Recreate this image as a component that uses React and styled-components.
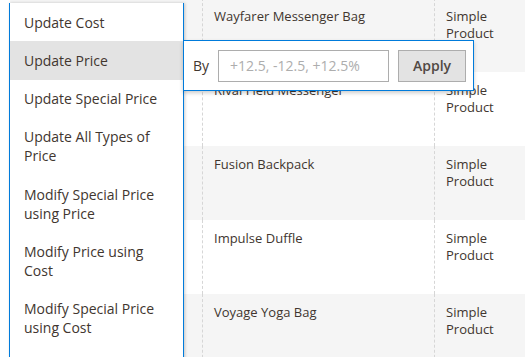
import React from "react";
import styled, { createGlobalStyle } from "styled-components";

const Global = createGlobalStyle`
  html, body {
    margin: 0;
    padding: 0;
    background: #fff;
    overflow: hidden;
  }
  body {
    font-family: "Open Sans", "Liberation Sans", sans-serif;
    color: #41362f;
  }
`;

const Page = styled.div`
  position: relative;
  width: 525px;
  height: 357px;
  overflow: hidden;
  padding-left: 10px;
  box-sizing: border-box;
`;

const Grid = styled.div`
  margin-top: -2px;
  display: flex;
  flex-direction: column;
`;

const Row = styled.div`
  display: grid;
  grid-template-columns: 193px 232px 1fr;
  height: 74px;
  background: ${(p) => (p.$odd ? "#f5f5f5" : "#fff")};
`;

const Cell = styled.div`
  padding: 10px 11px 0 11px;
  font-size: 13px;
  line-height: 17px;
  color: #41362f;
  border-right: ${(p) => (p.$last ? "none" : "1px dashed #d6d6d6")};
`;

const Menu = styled.ul`
  position: absolute;
  left: 9px;
  top: 3px;
  bottom: -20px;
  width: 173px;
  margin: 0;
  padding: 0;
  list-style: none;
  background: #fff;
  border: 1px solid #007bdb;
  border-top: none;
  box-shadow: 1px 0 3px rgba(0, 0, 0, 0.2);
`;

const Item = styled.li`
  position: relative;
  padding: 9.65px 14px;
  font-size: 14px;
  line-height: 19px;
  color: #41362f;
  background: ${(p) => (p.$active ? "#e3e3e3" : "transparent")};
`;

const Popover = styled.div`
  position: absolute;
  left: 173px;
  top: -1px;
  width: 291px;
  height: 51px;
  background: #fff;
  border: 1px solid #007bdb;
  box-shadow: 0 2px 4px rgba(0, 0, 0, 0.2);
  display: flex;
  align-items: center;
  padding: 0 7px 0 9px;
  box-sizing: border-box;
  gap: 9px;
  z-index: 2;
`;

const Label = styled.span`
  font-size: 14px;
  color: #41362f;
`;

const Input = styled.input`
  width: 171px;
  height: 32px;
  box-sizing: border-box;
  border: 1px solid #adadad;
  padding: 0 11px;
  font-family: "Open Sans", "Liberation Sans", sans-serif;
  font-size: 14px;
  color: #41362f;
  outline: none;
  &::placeholder {
    color: #adadad;
  }
`;

const Button = styled.button`
  width: 68px;
  height: 32px;
  box-sizing: border-box;
  background: #e3e3e3;
  border: 1px solid #adadad;
  font-family: "Open Sans", "Liberation Sans", sans-serif;
  font-size: 14px;
  font-weight: 600;
  color: #514943;
  padding: 0;
`;

const rows = [
  "Wayfarer Messenger Bag",
  "Rival Field Messenger",
  "Fusion Backpack",
  "Impulse Duffle",
  "Voyage Yoga Bag",
];

const items = [
  "Update Cost",
  "Update Price",
  "Update Special Price",
  "Update All Types of Price",
  "Modify Special Price using Price",
  "Modify Price using Cost",
  "Modify Special Price using Cost",
];

export default function App() {
  return (
    <>
      <Global />
      <Page>
        <Grid>
          {rows.map((name, i) => (
            <Row key={name} $odd={i % 2 === 0}>
              <Cell />
              <Cell>{name}</Cell>
              <Cell $last>
                Simple
                <br />
                Product
              </Cell>
            </Row>
          ))}
        </Grid>
        <Menu>
          {items.map((label, i) => (
            <Item key={label} $active={i === 1}>
              {label}
              {i === 1 && (
                <Popover>
                  <Label>By</Label>
                  <Input placeholder="+12.5, -12.5, +12.5%" />
                  <Button>Apply</Button>
                </Popover>
              )}
            </Item>
          ))}
        </Menu>
      </Page>
    </>
  );
}
